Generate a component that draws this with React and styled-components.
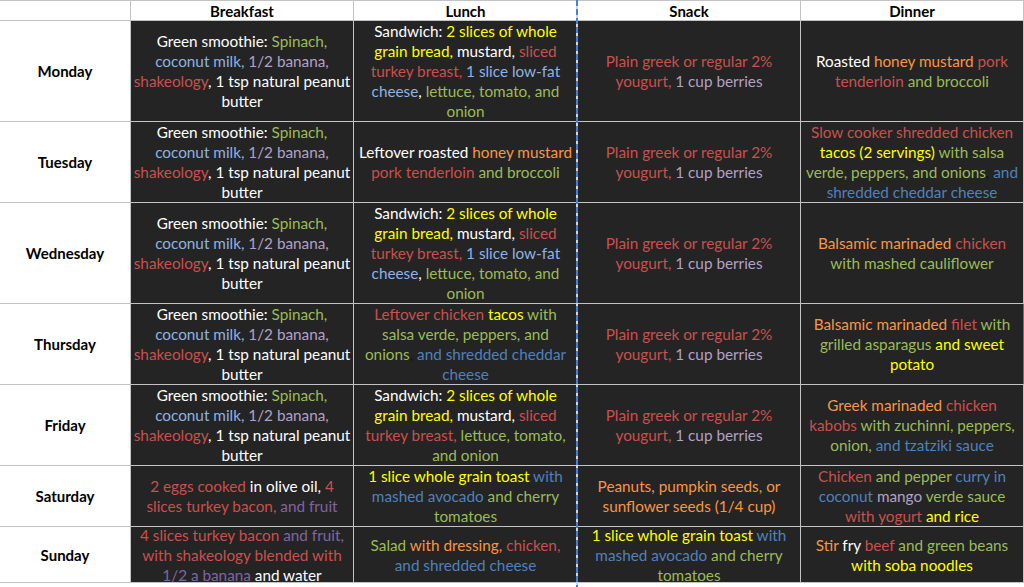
import React from 'react';
import styled, { createGlobalStyle } from 'styled-components';

const GlobalStyle = createGlobalStyle`
    html, body {
        margin: 0;
        padding: 0;
        background: #ffffff;
    }
    body {
        font-family: Lato, "Open Sans", sans-serif;
    }
`;

const COLORS = {
    w: '#ffffff',
    g: '#9bbb59',
    lb: '#8db3e2',
    lp: '#b2a1c7',
    r: '#c9504d',
    y: '#ffff00',
    o: '#f79646',
    b: '#4f81bd',
    p: '#8064a2',
    k: '#111111',
};

const Page = styled.div`
    position: relative;
    width: 1024px;
    height: 587px;
    overflow: hidden;
    background: #ffffff;
`;

const Table = styled.div`
    display: grid;
    grid-template-columns: 130px 222px 223px 222px 222px;
    grid-template-rows: 19px 100px 80px 100px 80px 80px 60px 55px;
    gap: 1px;
    background: #c3c3c3;
    border-top: 1px solid #c3c3c3;
    border-right: 1px solid #c3c3c3;
    border-bottom: 1px solid #c3c3c3;
    width: 1023px;
`;

const HeadCell = styled.div`
    background: #ffffff;
    display: flex;
    align-items: center;
    justify-content: center;
    padding-top: 1px;
    font-weight: 700;
    font-size: 15px;
    color: #000000;
`;

const DayCell = styled(HeadCell)`
    padding-top: 0;
`;

const MealCell = styled.div`
    background: #242424;
    display: flex;
    flex-direction: column;
    align-items: center;
    justify-content: center;
    text-align: center;
    white-space: nowrap;
    font-size: 15.3px;
    line-height: 20px;
    overflow: visible;
    box-shadow: ${(p) => (p.$edge ? '1px 0 0 #3c78d8' : 'none')};
`;

const Line = styled.div``;

const Seg = styled.span`
    color: ${(p) => COLORS[p.$c]};
`;

// dashed column selection marker drawn over the table
const Marker = styled.div`
    position: absolute;
    left: 576px;
    top: 0;
    bottom: 0;
    width: 2px;
    background: repeating-linear-gradient(to bottom, #4a7fd6 0 6px, #d6d6d6 6px 9px);
`;

const breakfast = [
    [['w', 'Green smoothie: '], ['g', 'Spinach,']],
    [['lb', 'coconut milk,'], ['lp', ' 1/2 banana,']],
    [['r', 'shakeology'], ['w', ', 1 tsp natural peanut']],
    [['w', 'butter']],
];

const sandwich = [
    [['w', 'Sandwich: '], ['y', '2 slices of whole']],
    [['y', 'grain bread,'], ['w', ' mustard, '], ['r', 'sliced']],
    [['r', 'turkey breast,'], ['lb', ' 1 slice low-fat']],
    [['lb', 'cheese'], ['w', ', '], ['g', 'lettuce, tomato, and']],
    [['g', 'onion']],
];

const yogurt = [
    [['r', 'Plain greek or regular 2%']],
    [['r', 'yougurt, '], ['lp', '1 cup berries']],
];

const toast = [
    [['y', '1 slice whole grain toast '], ['b', 'with']],
    [['b', 'mashed avocado '], ['g', 'and cherry']],
    [['g', 'tomatoes']],
];

const week = [
    {
        day: 'Monday',
        meals: [
            breakfast,
            sandwich,
            yogurt,
            [
                [['w', 'Roasted '], ['o', 'honey mustard '], ['r', 'pork']],
                [['r', 'tenderloin '], ['g', 'and broccoli']],
            ],
        ],
    },
    {
        day: 'Tuesday',
        meals: [
            breakfast,
            [
                [['w', 'Leftover roasted '], ['o', 'honey mustard']],
                [['r', 'pork tenderloin '], ['g', 'and broccoli']],
            ],
            yogurt,
            [
                [['r', 'Slow cooker shredded chicken']],
                [['y', 'tacos (2 servings)'], ['g', ' with salsa']],
                [['g', 'verde, peppers, and onions'], ['k', ','], ['b', ' and']],
                [['b', 'shredded cheddar cheese']],
            ],
        ],
    },
    {
        day: 'Wednesday',
        meals: [
            breakfast,
            sandwich,
            yogurt,
            [
                [['o', 'Balsamic marinaded '], ['r', 'chicken']],
                [['g', 'with mashed cauliflower']],
            ],
        ],
    },
    {
        day: 'Thursday',
        edge: true,
        meals: [
            breakfast,
            [
                [['r', 'Leftover chicken '], ['y', 'tacos'], ['g', ' with']],
                [['g', 'salsa verde, peppers, and']],
                [['g', 'onions'], ['k', ','], ['b', ' and shredded cheddar']],
                [['b', 'cheese']],
            ],
            yogurt,
            [
                [['o', 'Balsamic marinaded '], ['r', 'filet '], ['g', 'with']],
                [['g', 'grilled asparagus '], ['y', 'and sweet']],
                [['y', 'potato']],
            ],
        ],
    },
    {
        day: 'Friday',
        meals: [
            breakfast,
            [
                [['w', 'Sandwich: '], ['y', '2 slices of whole']],
                [['y', 'grain bread,'], ['w', ' mustard, '], ['r', 'sliced']],
                [['r', 'turkey breast, '], ['g', 'lettuce, tomato,']],
                [['g', 'and onion']],
            ],
            yogurt,
            [
                [['o', 'Greek marinaded '], ['r', 'chicken']],
                [['r', 'kabobs '], ['g', 'with zuchinni, peppers,']],
                [['g', 'onion, '], ['b', 'and tzatziki sauce']],
            ],
        ],
    },
    {
        day: 'Saturday',
        meals: [
            [
                [['r', '2 eggs cooked '], ['w', 'in olive oil, '], ['r', '4']],
                [['r', 'slices turkey bacon, '], ['p', 'and fruit']],
            ],
            toast,
            [
                [['o', 'Peanuts, pumpkin seeds, or']],
                [['o', 'sunflower seeds (1/4 cup)']],
            ],
            [
                [['r', 'Chicken '], ['g', 'and pepper '], ['b', 'curry in']],
                [['b', 'coconut '], ['lp', 'mango '], ['g', 'verde sauce']],
                [['r', 'with yogurt '], ['y', 'and rice']],
            ],
        ],
    },
    {
        day: 'Sunday',
        meals: [
            [
                [['r', '4 slices turkey bacon '], ['p', 'and fruit,']],
                [['r', 'with shakeology blended with']],
                [['p', '1/2 a banana '], ['w', 'and water']],
            ],
            [
                [['g', 'Salad '], ['o', 'with dressing, '], ['r', 'chicken,']],
                [['b', 'and shredded cheese']],
            ],
            toast,
            [
                [['o', 'Stir '], ['w', 'fry '], ['r', 'beef '], ['g', 'and green beans']],
                [['y', 'with soba noodles']],
            ],
        ],
    },
];

const headers = ['', 'Breakfast', 'Lunch', 'Snack', 'Dinner'];

const Meal = ({ lines, edge }) => (
    <MealCell $edge={edge}>
        {lines.map((line, i) => (
            <Line key={i}>
                {line.map(([c, text], j) => (
                    <Seg key={j} $c={c}>{text}</Seg>
                ))}
            </Line>
        ))}
    </MealCell>
);

export default function App() {
    return (
        <Page>
            <GlobalStyle />
            <Table>
                {headers.map((h, i) => (
                    <HeadCell key={i}>{h}</HeadCell>
                ))}
                {week.map((row) => (
                    <React.Fragment key={row.day}>
                        <DayCell>{row.day}</DayCell>
                        {row.meals.map((lines, i) => (
                            <Meal key={i} lines={lines} edge={row.edge && i === 3} />
                        ))}
                    </React.Fragment>
                ))}
            </Table>
            <Marker />
        </Page>
    );
}
